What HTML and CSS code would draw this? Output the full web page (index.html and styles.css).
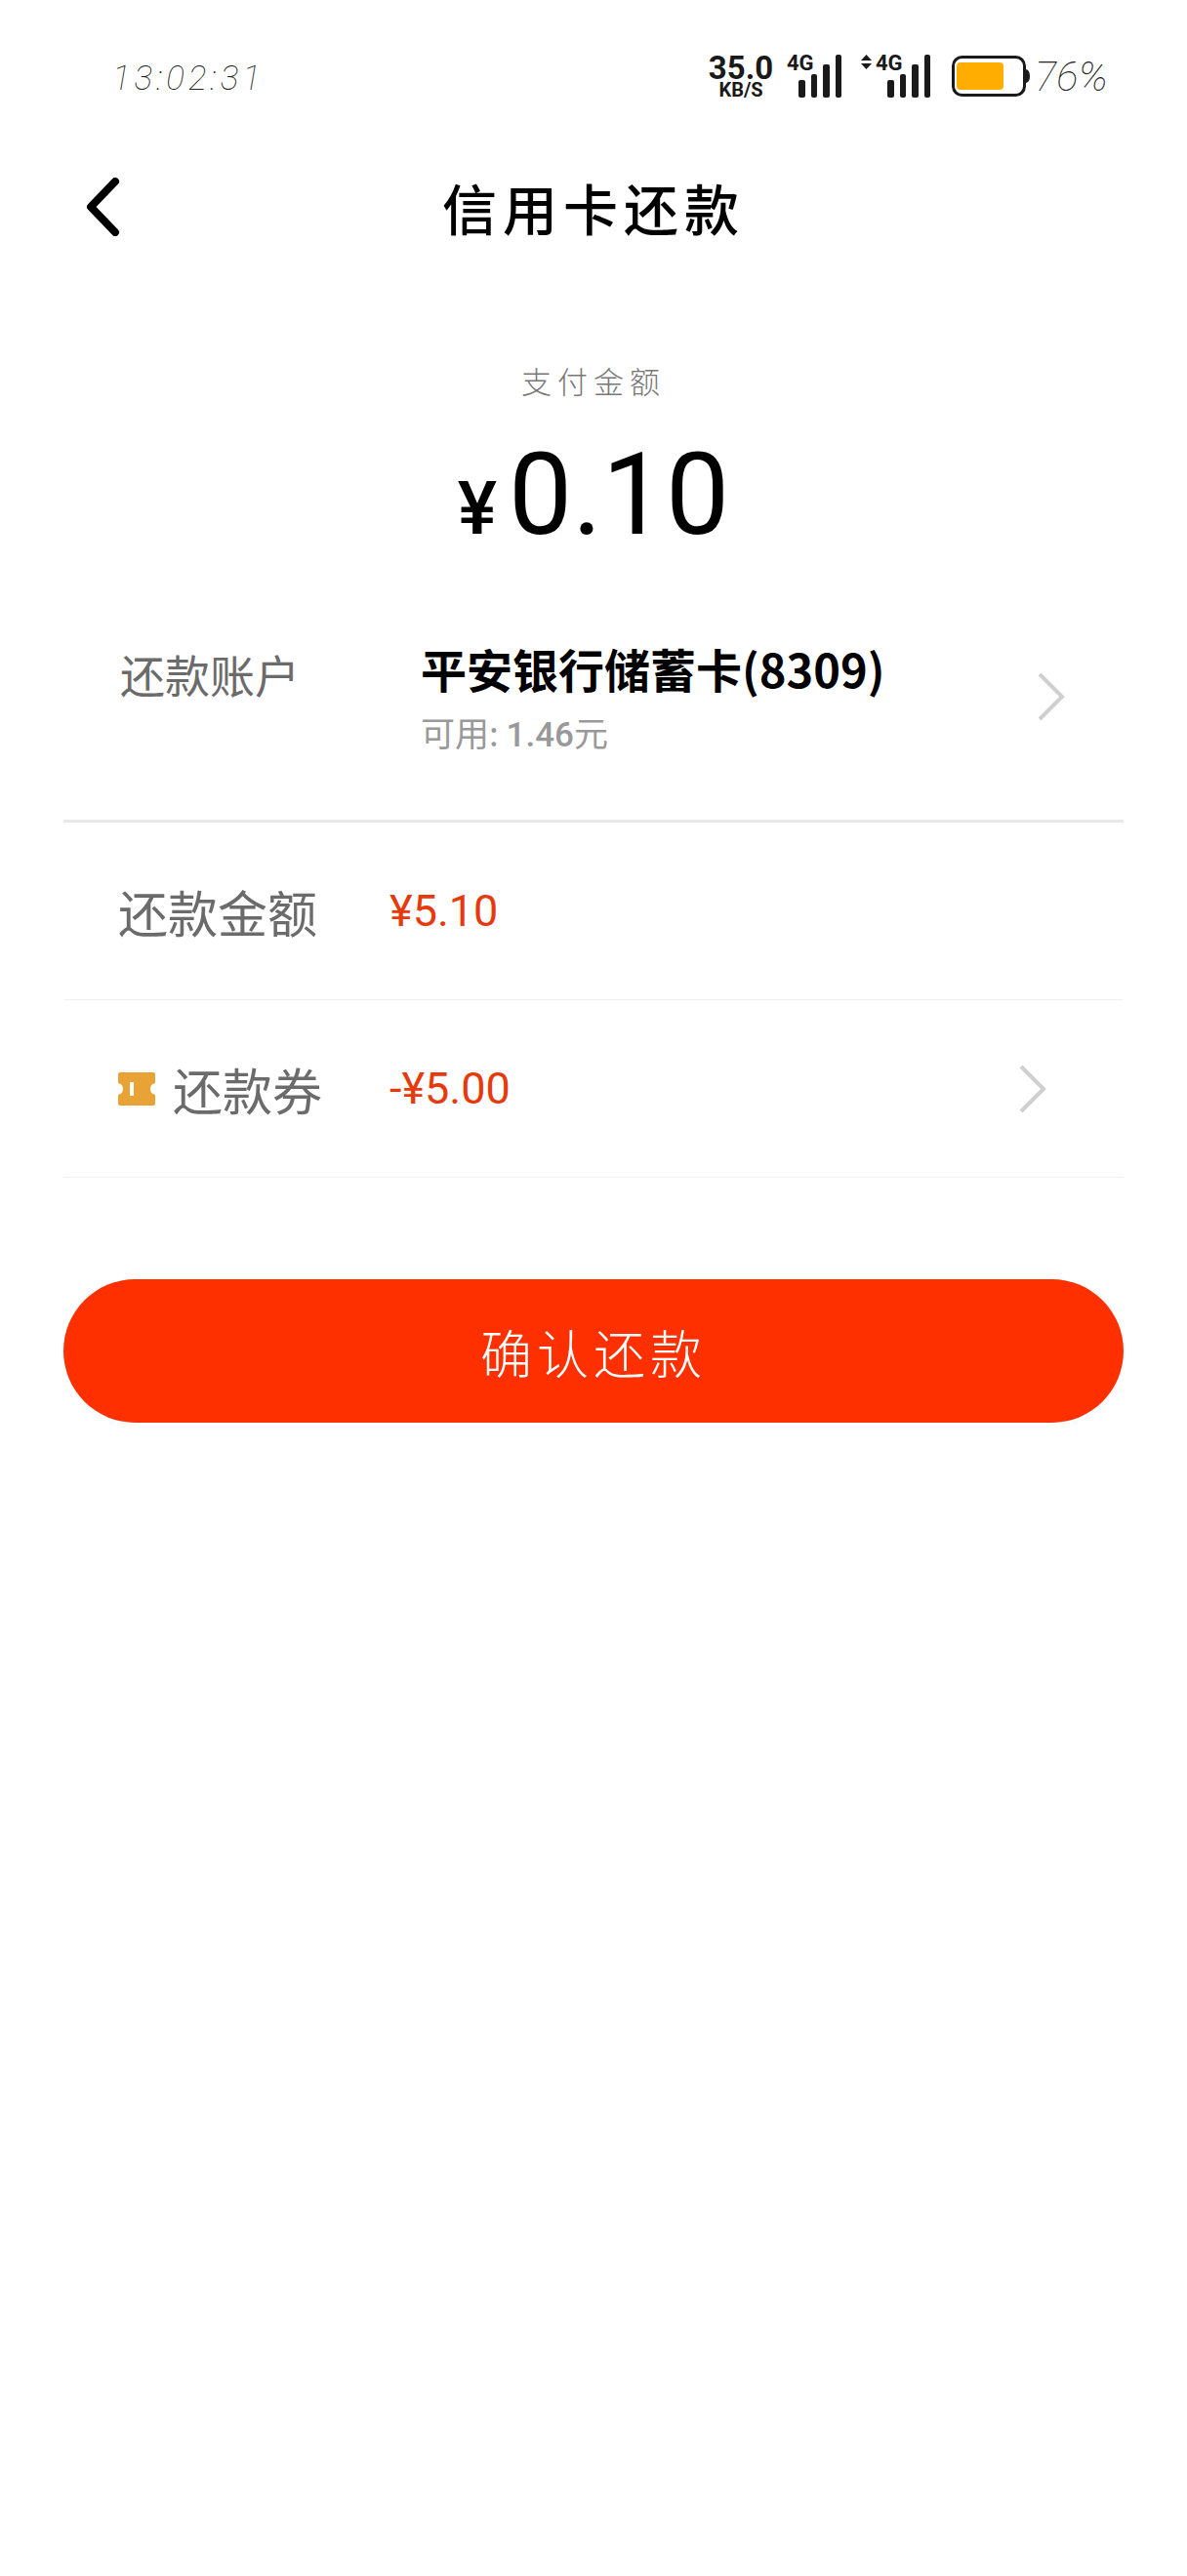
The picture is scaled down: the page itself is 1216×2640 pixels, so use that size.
FILE: index.html
```html
<!DOCTYPE html>
<html lang="zh-CN">
<head>
    <meta charset="UTF-8">
    <meta name="viewport" content="width=device-width, initial-scale=1.0">
    <title>信用卡还款</title>
    <link rel="stylesheet" href="styles.css">
</head>
<body>

    <!-- Status bar -->
    <div class="status-bar">
        <span class="time">13:02:31</span>
        <div class="status-right">
            <div class="speed">
                <span class="speed-num">35.0</span>
                <span class="speed-unit">KB/S</span>
            </div>
            <svg class="signal-one" width="57" height="44" viewBox="0 0 57 44">
                <text x="0" y="16" class="net-text">4G</text>
                <rect x="12" y="26" width="7" height="18" rx="2"/>
                <rect x="25" y="20" width="6" height="24" rx="2"/>
                <rect x="37" y="10" width="7" height="34" rx="2"/>
                <rect x="50" y="0" width="6" height="44" rx="2"/>
            </svg>
            <svg class="signal-two" width="72" height="44" viewBox="0 0 72 44">
                <path d="M0 6 L5.500 0 L11 6 Z M0 9 L11 9 L5.500 15 Z"/>
                <text x="15" y="16" class="net-text">4G</text>
                <rect x="27" y="26" width="7" height="18" rx="2"/>
                <rect x="40" y="20" width="6" height="24" rx="2"/>
                <rect x="52" y="10" width="7" height="34" rx="2"/>
                <rect x="65" y="0" width="6" height="44" rx="2"/>
            </svg>
            <svg class="battery" width="80" height="42" viewBox="0 0 80 42">
                <rect x="1.500" y="1.500" width="73" height="39" rx="9" fill="#fff" stroke="#1a1a1a" stroke-width="3"/>
                <rect x="5" y="7" width="48" height="28" rx="4" fill="#ffae00"/>
                <path d="M76 14 Q80 15 80 21 Q80 27 76 28 Z" fill="#1a1a1a"/>
            </svg>
            <span class="percent">76%</span>
        </div>
    </div>

    <!-- Header -->
    <header class="top-nav">
        <svg class="back" width="36" height="60" viewBox="0 0 36 60">
            <path d="M31 4 L6 30 L31 56" fill="none" stroke="#000" stroke-width="8" stroke-linecap="round" stroke-linejoin="round"/>
        </svg>
        <h1>信用卡还款</h1>
    </header>

    <!-- Amount -->
    <section class="pay-amount">
        <p class="pay-label">支付金额</p>
        <p class="pay-value"><span class="yen">¥</span>0.10</p>
    </section>

    <!-- Detail rows -->
    <section class="details">
        <div class="row row-account">
            <span class="account-label">还款账户</span>
            <div class="account-info">
                <div class="account-name">平安银行储蓄卡(8309)</div>
                <div class="account-balance">可用: <b>1.46</b>元</div>
            </div>
            <svg class="arrow arrow-account" width="30" height="52" viewBox="0 0 30 52">
                <path d="M3 3 L26 26 L3 49" fill="none" stroke="#cfcfcf" stroke-width="4"/>
            </svg>
        </div>
        <div class="row row-line">
            <span class="row-label">还款金额</span>
            <span class="row-money">¥5.10</span>
        </div>
        <div class="row row-line">
            <div class="row-label coupon-label">
                <svg class="ticket" width="38" height="34" viewBox="0 0 38 34">
                    <path d="M2 0 H36 Q38 0 38 2 V11 Q33 12 33 17 Q33 22 38 23 V32 Q38 34 36 34 H2 Q0 34 0 32 V23 Q5 22 5 17 Q5 12 0 11 V2 Q0 0 2 0 Z" fill="#e9a235"/>
                    <rect x="12" y="10" width="4" height="14" fill="#fff"/>
                </svg>
                还款券
            </div>
            <span class="row-money">-¥5.00</span>
            <svg class="arrow arrow-coupon" width="30" height="52" viewBox="0 0 30 52">
                <path d="M3 3 L26 26 L3 49" fill="none" stroke="#cfcfcf" stroke-width="4"/>
            </svg>
        </div>
    </section>

    <button class="confirm">确认还款</button>

</body>
</html>
```

FILE: styles.css
```css
/* Global Styles */
body {
    font-family: "Noto Sans CJK SC", Roboto, sans-serif;
    margin: 0;
    padding: 0;
    background-color: #fff;
    color: #000;
}

p, h1 {
    margin: 0;
}

/* Status bar */
.status-bar {
    display: flex;
    justify-content: space-between;
    align-items: center;
    height: 44px;
    padding: 56px 81px 2px 115px;
}

.time {
    font-family: Roboto, sans-serif;
    font-size: 35px;
    font-weight: 100;
    font-style: italic;
    letter-spacing: 4px;
    color: #222;
    line-height: 44px;
    margin-top: 6px;
}

.status-right {
    display: flex;
    align-items: center;
}

.speed {
    display: flex;
    flex-direction: column;
    align-items: center;
    font-family: Roboto, sans-serif;
    font-weight: 700;
    color: #1a1a1a;
    width: 68px;
    margin-right: 13px;
}

.speed-num {
    font-size: 33px;
    line-height: 28px;
}

.speed-unit {
    font-size: 20px;
    line-height: 17px;
}

.status-right svg {
    fill: #1a1a1a;
    flex: none;
    overflow: visible;
}

.net-text {
    font-family: Roboto, sans-serif;
    font-size: 22px;
    font-weight: 700;
}

.signal-one {
    margin-right: 19px;
}

.signal-two {
    margin-right: 21px;
}

.percent {
    font-family: Roboto, sans-serif;
    font-size: 42px;
    font-weight: 100;
    font-style: italic;
    color: #222;
    margin-left: 5px;
}

/* Header */
.top-nav {
    position: relative;
    display: flex;
    justify-content: center;
    align-items: center;
    margin-top: 80px;
    height: 60px;
}

.back {
    position: absolute;
    left: 87px;
    top: 0;
}

.top-nav h1 {
    font-size: 56px;
    font-weight: 500;
    letter-spacing: 6px;
    line-height: 60px;
}

/* Amount */
.pay-amount {
    text-align: center;
    margin-top: 123px;
}

.pay-label {
    font-size: 31px;
    font-weight: 300;
    letter-spacing: 6px;
    line-height: 50px;
    color: #777;
}

.pay-value {
    font-family: Roboto, sans-serif;
    font-size: 116px;
    line-height: 136px;
    margin-top: 24px;
}

.yen {
    font-size: 76px;
    font-weight: 500;
    margin-right: 12px;
}

/* Detail rows */
.details {
    margin: 46px 65px 0;
}

.row {
    position: relative;
    display: flex;
    align-items: center;
    box-sizing: border-box;
    border-bottom: 1px solid #f0f0f0;
}

.row-account {
    align-items: flex-start;
    height: 208px;
    padding-left: 58px;
    border-bottom: 3px solid #e8e8e8;
}

.account-label {
    font-size: 46px;
    color: #6b6b6b;
    line-height: 60px;
    width: 308px;
    margin-top: 25px;
}

.account-name {
    font-size: 47px;
    font-weight: 700;
    line-height: 60px;
    margin-top: 20px;
}

.account-balance {
    font-size: 35px;
    color: #999;
    line-height: 50px;
    margin-top: 10px;
}

.account-balance b {
    font-family: Roboto, sans-serif;
    font-weight: 500;
}

.arrow {
    position: absolute;
}

.arrow-account {
    right: 59px;
    top: 53px;
}

.arrow-coupon {
    right: 78px;
    top: 65px;
}

.row-line {
    height: 182px;
}

.row-label {
    font-size: 51px;
    color: #6b6b6b;
    width: 334px;
    padding-left: 56px;
    box-sizing: border-box;
}

.coupon-label {
    display: flex;
    align-items: center;
}

.ticket {
    margin-right: 18px;
    flex: none;
}

.row-money {
    font-family: Roboto, sans-serif;
    font-size: 45px;
    color: #e63a0c;
}

/* Confirm button */
.confirm {
    display: block;
    box-sizing: border-box;
    width: 1086px;
    height: 147px;
    margin: 104px 65px 0;
    border: none;
    border-radius: 74px;
    background-color: #ff3000;
    color: #fff;
    font-family: "Noto Sans CJK SC", sans-serif;
    font-size: 53px;
    font-weight: 300;
    letter-spacing: 5px;
}
```
